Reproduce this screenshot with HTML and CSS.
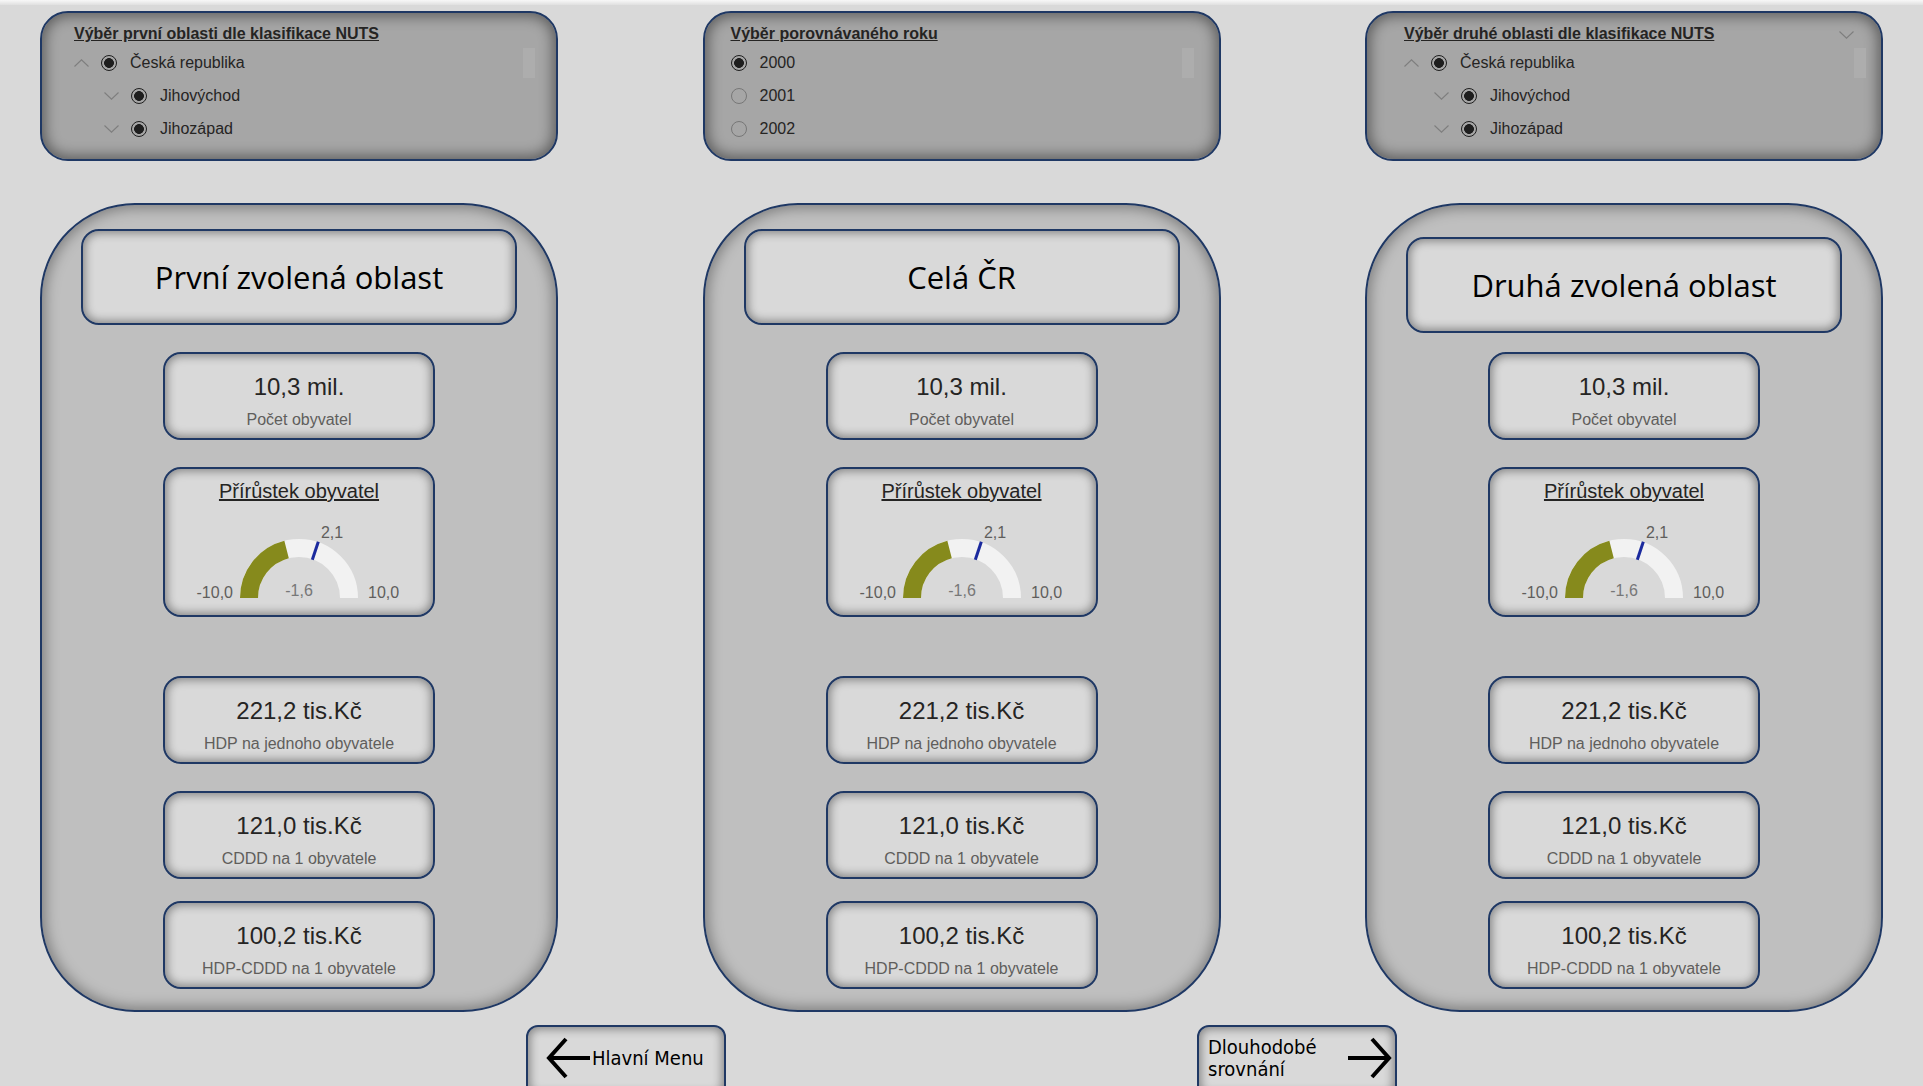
FILE: index.html
```html
<!DOCTYPE html>
<html lang="cs">
<head>
<meta charset="utf-8">
<title>Srovnání oblastí</title>
<link rel="stylesheet" href="styles.css">
</head>
<body>
<div class="top-strip"></div>

<div class="slicers">
  <section class="slicer slicer--first">
    <h2 class="slicer-title">Výběr první oblasti dle klasifikace NUTS</h2>
    <ul class="tree">
      <li class="row"><svg class="chev" viewBox="0 0 15 8"><polyline points="0.5,7.5 7.5,0.8 14.5,7.5"/></svg><span class="radio on"></span><span class="label">Česká republika</span></li>
      <li class="row row--l2"><svg class="chev" viewBox="0 0 15 8"><polyline points="0.5,0.5 7.5,7.2 14.5,0.5"/></svg><span class="radio on"></span><span class="label">Jihovýchod</span></li>
      <li class="row row--l2"><svg class="chev" viewBox="0 0 15 8"><polyline points="0.5,0.5 7.5,7.2 14.5,0.5"/></svg><span class="radio on"></span><span class="label">Jihozápad</span></li>
    </ul>
    <div class="thumb"></div>
  </section>

  <section class="slicer slicer--year">
    <h2 class="slicer-title">Výběr porovnávaného roku</h2>
    <ul class="tree">
      <li class="row"><span class="radio on"></span><span class="label">2000</span></li>
      <li class="row"><span class="radio"></span><span class="label">2001</span></li>
      <li class="row"><span class="radio"></span><span class="label">2002</span></li>
    </ul>
    <div class="thumb"></div>
  </section>

  <section class="slicer slicer--second">
    <h2 class="slicer-title">Výběr druhé oblasti dle klasifikace NUTS</h2>
    <svg class="chev chev--head" viewBox="0 0 15 8"><polyline points="0.5,0.5 7.5,7.2 14.5,0.5"/></svg>
    <ul class="tree">
      <li class="row"><svg class="chev" viewBox="0 0 15 8"><polyline points="0.5,7.5 7.5,0.8 14.5,7.5"/></svg><span class="radio on"></span><span class="label">Česká republika</span></li>
      <li class="row row--l2"><svg class="chev" viewBox="0 0 15 8"><polyline points="0.5,0.5 7.5,7.2 14.5,0.5"/></svg><span class="radio on"></span><span class="label">Jihovýchod</span></li>
      <li class="row row--l2"><svg class="chev" viewBox="0 0 15 8"><polyline points="0.5,0.5 7.5,7.2 14.5,0.5"/></svg><span class="radio on"></span><span class="label">Jihozápad</span></li>
    </ul>
    <div class="thumb"></div>
  </section>
</div>

<div class="panels">
  <section class="panel">
    <div class="title-box">První zvolená oblast</div>
    <div class="card"><div class="value">10,3 mil.</div><div class="caption">Počet obyvatel</div></div>
    <div class="card card--gauge">
      <div class="gauge-title">Přírůstek obyvatel</div>
      <svg class="gauge" viewBox="0 0 268 110" width="268" height="110">
        <path class="g-track" d="M84 93 A50 50 0 0 1 184 93"/>
        <path class="g-fill" d="M84 93 A50 50 0 0 1 121.57 44.57"/>
        <line class="g-target" x1="147.3" y1="54.8" x2="153.3" y2="36.7"/>
        <text class="g-lbl" x="68" y="93" text-anchor="end">-10,0</text>
        <text class="g-lbl" x="203" y="93">10,0</text>
        <text class="g-lbl g-val" x="134" y="91" text-anchor="middle">-1,6</text>
        <text class="g-lbl" x="167" y="33" text-anchor="middle">2,1</text>
      </svg>
    </div>
    <div class="card card--gap"><div class="value">221,2 tis.Kč</div><div class="caption">HDP na jednoho obyvatele</div></div>
    <div class="card"><div class="value">121,0 tis.Kč</div><div class="caption">CDDD na 1 obyvatele</div></div>
    <div class="card card--tight"><div class="value">100,2 tis.Kč</div><div class="caption">HDP-CDDD na 1 obyvatele</div></div>
  </section>

  <section class="panel">
    <div class="title-box">Celá ČR</div>
    <div class="card"><div class="value">10,3 mil.</div><div class="caption">Počet obyvatel</div></div>
    <div class="card card--gauge">
      <div class="gauge-title">Přírůstek obyvatel</div>
      <svg class="gauge" viewBox="0 0 268 110" width="268" height="110">
        <path class="g-track" d="M84 93 A50 50 0 0 1 184 93"/>
        <path class="g-fill" d="M84 93 A50 50 0 0 1 121.57 44.57"/>
        <line class="g-target" x1="147.3" y1="54.8" x2="153.3" y2="36.7"/>
        <text class="g-lbl" x="68" y="93" text-anchor="end">-10,0</text>
        <text class="g-lbl" x="203" y="93">10,0</text>
        <text class="g-lbl g-val" x="134" y="91" text-anchor="middle">-1,6</text>
        <text class="g-lbl" x="167" y="33" text-anchor="middle">2,1</text>
      </svg>
    </div>
    <div class="card card--gap"><div class="value">221,2 tis.Kč</div><div class="caption">HDP na jednoho obyvatele</div></div>
    <div class="card"><div class="value">121,0 tis.Kč</div><div class="caption">CDDD na 1 obyvatele</div></div>
    <div class="card card--tight"><div class="value">100,2 tis.Kč</div><div class="caption">HDP-CDDD na 1 obyvatele</div></div>
  </section>

  <section class="panel panel--alt">
    <div class="title-box">Druhá zvolená oblast</div>
    <div class="card"><div class="value">10,3 mil.</div><div class="caption">Počet obyvatel</div></div>
    <div class="card card--gauge">
      <div class="gauge-title">Přírůstek obyvatel</div>
      <svg class="gauge" viewBox="0 0 268 110" width="268" height="110">
        <path class="g-track" d="M84 93 A50 50 0 0 1 184 93"/>
        <path class="g-fill" d="M84 93 A50 50 0 0 1 121.57 44.57"/>
        <line class="g-target" x1="147.3" y1="54.8" x2="153.3" y2="36.7"/>
        <text class="g-lbl" x="68" y="93" text-anchor="end">-10,0</text>
        <text class="g-lbl" x="203" y="93">10,0</text>
        <text class="g-lbl g-val" x="134" y="91" text-anchor="middle">-1,6</text>
        <text class="g-lbl" x="167" y="33" text-anchor="middle">2,1</text>
      </svg>
    </div>
    <div class="card card--gap"><div class="value">221,2 tis.Kč</div><div class="caption">HDP na jednoho obyvatele</div></div>
    <div class="card"><div class="value">121,0 tis.Kč</div><div class="caption">CDDD na 1 obyvatele</div></div>
    <div class="card card--tight"><div class="value">100,2 tis.Kč</div><div class="caption">HDP-CDDD na 1 obyvatele</div></div>
  </section>
</div>

<div class="nav">
  <div class="nav-btn nav-btn--back">
    <svg class="arrow" viewBox="0 0 44 42" width="44" height="42"><polyline points="20,2 3,21 20,40"/><line x1="3" y1="21" x2="44" y2="21"/></svg>
    <span class="nav-text">Hlavní Menu</span>
  </div>
  <div class="nav-btn nav-btn--next">
    <span class="nav-text">Dlouhodobé<br>srovnání</span>
    <svg class="arrow" viewBox="0 0 44 42" width="44" height="42"><polyline points="24,2 41,21 24,40"/><line x1="41" y1="21" x2="0" y2="21"/></svg>
  </div>
</div>
</body>
</html>
```

FILE: styles.css
```css
* { box-sizing: border-box; margin: 0; padding: 0; }
html, body { height: 100%; overflow: hidden; }
body {
  background: #d9d9d9;
  font-family: "Liberation Sans", Arial, sans-serif;
  color: #252423;
}
.top-strip { height: 5px; background: linear-gradient(#f8f8f8, #e0e0e0); }

/* ---------- slicers ---------- */
.slicers, .panels {
  display: flex;
  justify-content: space-between;
  padding: 0 40px;
}
.slicers { margin-top: 6px; }
.slicer {
  position: relative;
  width: 518px;
  height: 150px;
  background: #a6a6a6;
  border: 2px solid #1f3864;
  border-radius: 28px;
  box-shadow: inset 0 0 14px 3px rgba(0, 0, 0, 0.45);
  padding: 11px 0 0 32px;
}
.slicer--year { padding-left: 26px; }
.slicer--second { padding-left: 37px; }
.slicer-title {
  font-size: 16px;
  font-weight: bold;
  line-height: 20px;
  text-decoration: underline;
  color: #252423;
}
.tree { list-style: none; margin-top: 2px; }
.row {
  display: flex;
  align-items: center;
  height: 33px;
  font-size: 16px;
}
.row--l2 { padding-left: 30px; }
.chev {
  width: 15px;
  height: 8px;
  margin-right: 12px;
  flex: none;
  fill: none;
  stroke: #7e7e7e;
  stroke-width: 1.1;
}
.chev--head { position: absolute; top: 18px; right: 27px; margin: 0; }
.radio {
  width: 16px;
  height: 16px;
  border-radius: 50%;
  border: 1px solid #777;
  margin-right: 13px;
  flex: none;
}
.radio.on {
  border: 1.6px solid #1e1e1e;
  background: radial-gradient(circle, #1e1e1e 0 4.6px, transparent 5.2px);
}
.thumb {
  position: absolute;
  top: 35px;
  right: 21px;
  width: 12px;
  height: 30px;
  background: #adadad;
}
.slicer--year .thumb { right: 25px; }
.slicer--second .thumb { right: 15px; }

/* ---------- panels ---------- */
.panels { margin-top: 42px; }
.panel {
  width: 518px;
  height: 809px;
  background: #bfbfbf;
  border: 2px solid #1f3864;
  border-radius: 95px;
  box-shadow: inset 0 0 14px 3px rgba(0, 0, 0, 0.35);
  display: flex;
  flex-direction: column;
  align-items: center;
  padding-top: 24px;
}
.title-box {
  width: 436px;
  height: 96px;
  flex: none;
  background: #d9d9d9;
  border: 2px solid #1f3864;
  border-radius: 18px;
  box-shadow: inset 0 0 10px 2px rgba(0, 0, 0, 0.4);
  display: flex;
  align-items: center;
  justify-content: center;
  font-family: "Open Sans", "Noto Sans", sans-serif;
  font-size: 31px;
  color: #000;
}
.panel--alt .title-box { margin: 8px 0 -8px; }
.card {
  width: 272px;
  height: 88px;
  flex: none;
  margin-top: 27px;
  background: #d9d9d9;
  border: 2px solid #1f3864;
  border-radius: 18px;
  box-shadow: inset 0 0 10px 2px rgba(0, 0, 0, 0.4);
  text-align: center;
  padding-top: 19px;
}
.card--gauge { height: 150px; padding-top: 8px; }
.card--gap { margin-top: 59px; }
.card--tight { margin-top: 22px; }
.value { font-size: 24px; line-height: 28px; color: #252423; }
.caption { font-size: 16px; line-height: 20px; margin-top: 9px; color: #605e5c; }
.gauge-title {
  font-size: 20px;
  line-height: 28px;
  text-decoration: underline;
  color: #252423;
}
.gauge { display: block; }
.g-track { fill: none; stroke: #f2f2f2; stroke-width: 18; }
.g-fill { fill: none; stroke: #868a1c; stroke-width: 18; }
.g-target { stroke: #1b2a9e; stroke-width: 3; }
.g-lbl { font-family: "Liberation Sans", Arial, sans-serif; font-size: 16px; fill: #605e5c; }
.g-val { fill: #777; }

/* ---------- nav buttons ---------- */
.nav {
  display: flex;
  gap: 471px;
  padding-left: 526px;
  margin-top: 13px;
}
.nav-btn {
  width: 200px;
  height: 72px;
  flex: none;
  background: #d9d9d9;
  border: 2px solid #1f3864;
  border-radius: 12px;
  box-shadow: inset 0 0 10px 2px rgba(0, 0, 0, 0.4);
  display: flex;
  align-items: center;
  padding-bottom: 6px;
  color: #000;
}
.nav-btn--back { padding-left: 18px; }
.nav-btn--next { padding-left: 9px; padding-right: 3px; justify-content: space-between; }
.arrow { flex: none; fill: none; stroke: #000; stroke-width: 4; }
.nav-text {
  font-family: "Liberation Sans Narrow", "DejaVu Sans Condensed", "Liberation Sans", sans-serif;
  font-size: 20px;
  line-height: 22px;
}
.nav-btn--back .nav-text { margin-left: 2px; }
```
